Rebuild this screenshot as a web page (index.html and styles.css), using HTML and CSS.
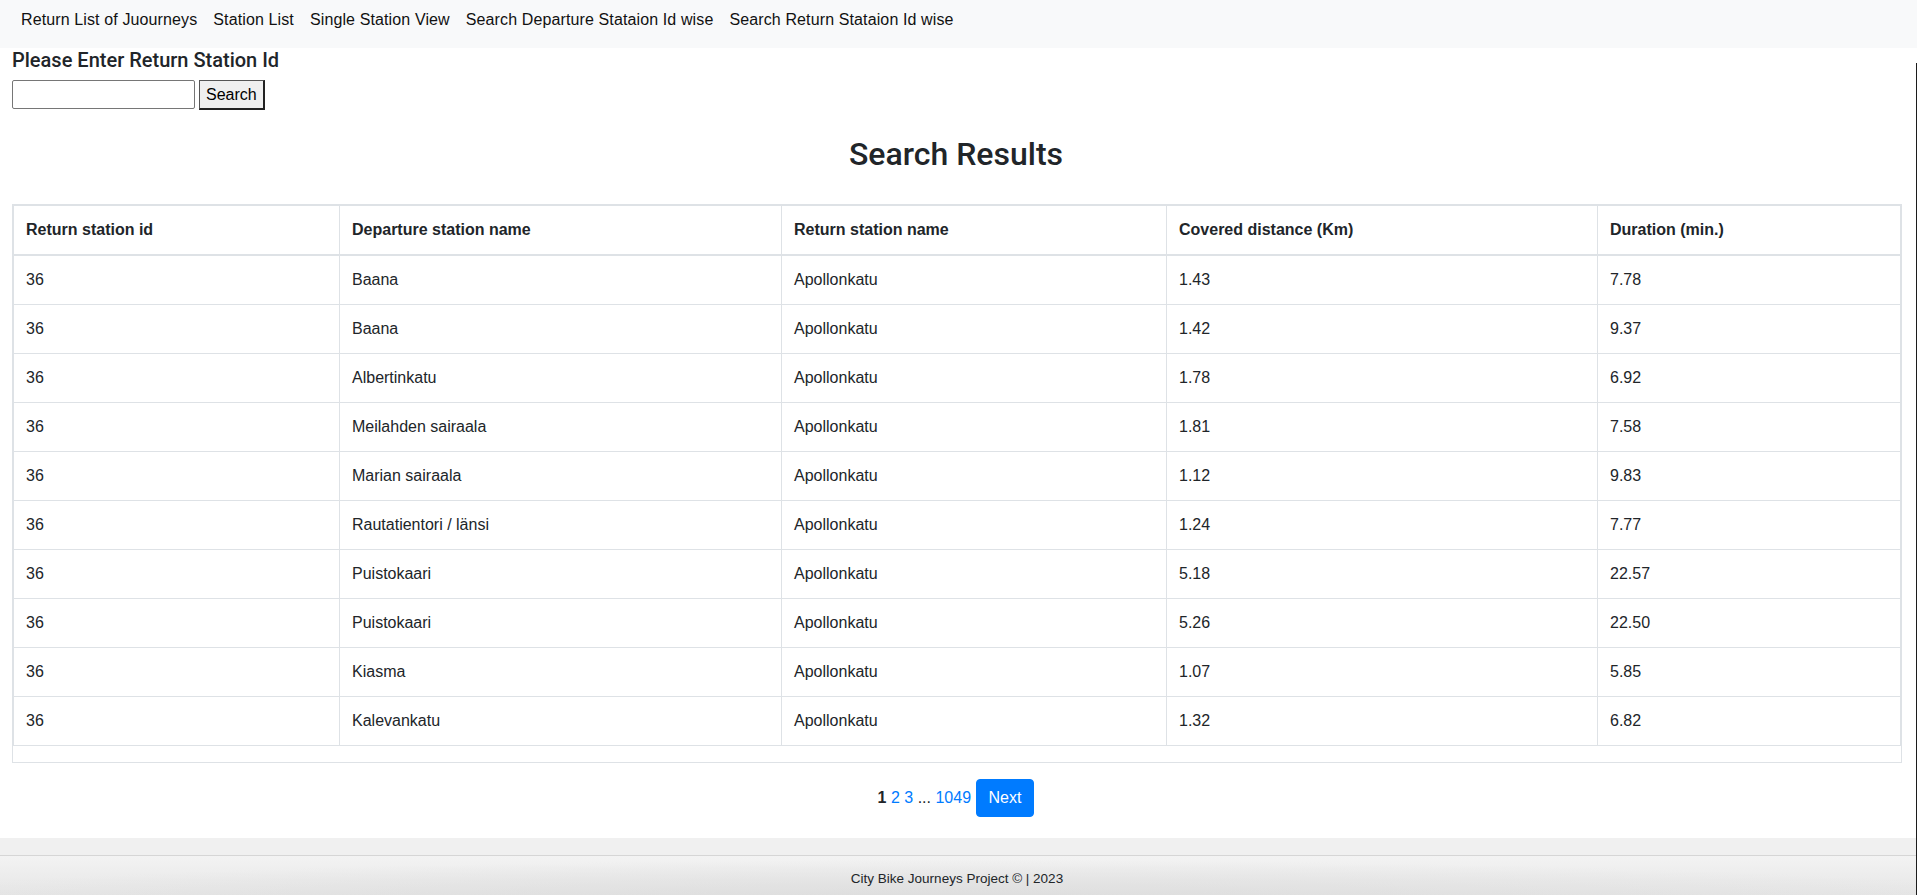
FILE: index.html
```html
<!DOCTYPE html>
<html lang="en">
<head>
<meta charset="utf-8">
<title>City Bike Journeys</title>
<link rel="stylesheet" href="styles.css">
</head>
<body>
<nav class="topnav">
  <a class="nav-link" href="#">Return List of Juourneys</a>
  <a class="nav-link" href="#">Station List</a>
  <a class="nav-link" href="#">Single Station View</a>
  <a class="nav-link" href="#">Search Departure Stataion Id wise</a>
  <a class="nav-link" href="#">Search Return Stataion Id wise</a>
</nav>
<main class="content">
  <h5 class="prompt">Please Enter Return Station Id</h5>
  <form class="search-form">
    <input class="search-input" type="text">
    <button class="search-btn" type="button">Search</button>
  </form>
  <h2 class="results-title">Search Results</h2>
  <div class="table-wrap">
    <table class="results">
      <colgroup>
        <col class="c1"><col class="c2"><col class="c3"><col class="c4"><col class="c5">
      </colgroup>
      <thead>
        <tr><th>Return station id</th><th>Departure station name</th><th>Return station name</th><th>Covered distance (Km)</th><th>Duration (min.)</th></tr>
      </thead>
      <tbody>
        <tr><td>36</td><td>Baana</td><td>Apollonkatu</td><td>1.43</td><td>7.78</td></tr>
        <tr><td>36</td><td>Baana</td><td>Apollonkatu</td><td>1.42</td><td>9.37</td></tr>
        <tr><td>36</td><td>Albertinkatu</td><td>Apollonkatu</td><td>1.78</td><td>6.92</td></tr>
        <tr><td>36</td><td>Meilahden sairaala</td><td>Apollonkatu</td><td>1.81</td><td>7.58</td></tr>
        <tr><td>36</td><td>Marian sairaala</td><td>Apollonkatu</td><td>1.12</td><td>9.83</td></tr>
        <tr><td>36</td><td>Rautatientori / länsi</td><td>Apollonkatu</td><td>1.24</td><td>7.77</td></tr>
        <tr><td>36</td><td>Puistokaari</td><td>Apollonkatu</td><td>5.18</td><td>22.57</td></tr>
        <tr><td>36</td><td>Puistokaari</td><td>Apollonkatu</td><td>5.26</td><td>22.50</td></tr>
        <tr><td>36</td><td>Kiasma</td><td>Apollonkatu</td><td>1.07</td><td>5.85</td></tr>
        <tr><td>36</td><td>Kalevankatu</td><td>Apollonkatu</td><td>1.32</td><td>6.82</td></tr>
      </tbody>
    </table>
  </div>
  <div class="pager">
    <b class="page-current">1</b> <a class="page-link" href="#">2</a> <a class="page-link" href="#">3</a> <span class="page-gap">...</span> <a class="page-link" href="#">1049</a> <button class="btn-next" type="button">Next</button>
  </div>
</main>
<footer class="footer">
  <div class="footer-inner">City Bike Journeys Project © | 2023</div>
</footer>
<div class="edge"></div>
</body>
</html>
```
FILE: styles.css
```css
* { box-sizing: border-box; }
html, body { margin: 0; padding: 0; }
body {
  font-family: "Liberation Sans", Arial, sans-serif;
  font-size: 16px;
  line-height: 24px;
  color: #212529;
  background: #ffffff;
  height: 895px;
  overflow: hidden;
}
.topnav {
  height: 48px;
  background: #f8f9fa;
  display: flex;
  align-items: flex-start;
  padding: 8px 0 0 13px;
}
.nav-link {
  color: #111;
  text-decoration: none;
  padding: 0 8px;
  line-height: 24px;
  font-size: 16px;
  letter-spacing: 0.12px;
}
.content {
  padding: 0 0 21px 12px;
  background: #fff;
}
.prompt {
  margin: 0;
  font-family: Roboto, "Liberation Sans", Arial, sans-serif;
  font-size: 20px;
  line-height: 24px;
  font-weight: 500;
  color: #212529;
}
.search-form {
  margin: 8px 0 0;
  display: flex;
  gap: 4px;
  height: 30px;
}
.search-input {
  width: 183px;
  height: 29px;
  border: 1px solid #767676;
  border-radius: 2px;
  padding: 1px 2px;
  font-size: 16px;
  background: #fff;
}
.search-btn {
  height: 30px;
  padding: 0 6px;
  font-family: "Liberation Sans", Arial, sans-serif;
  font-size: 16px;
  color: #000;
  background: #efefef;
  border-style: solid;
  border-width: 1px 2px 2px 1px;
  border-color: #555 #222 #222 #555;
  border-radius: 0;
}
.results-title {
  margin: 25px 0 31px;
  text-align: center;
  font-family: Roboto, "Liberation Sans", Arial, sans-serif;
  font-size: 32px;
  line-height: 38px;
  font-weight: 500;
  color: #212529;
  padding-right: 17px;
}
.table-wrap {
  width: 1890px;
  border: 1px solid #dee2e6;
}
.results {
  width: 100%;
  border-collapse: collapse;
  table-layout: fixed;
  margin-bottom: 16px;
  border: 1px solid #dee2e6;
}
.c1 { width: 326px; }
.c2 { width: 442px; }
.c3 { width: 385px; }
.c4 { width: 431px; }
.results th, .results td {
  border: 1px solid #dee2e6;
  padding: 12px;
  text-align: left;
  vertical-align: top;
  white-space: nowrap;
}
.results th {
  font-weight: 700;
  border-bottom-width: 2px;
}
.pager {
  margin-top: 16px;
  text-align: center;
  height: 38px;
  line-height: 38px;
  padding-right: 17px;
}
.page-current { font-weight: 700; color: #212529; }
.page-link { color: #007bff; text-decoration: none; }
.page-gap { color: #212529; }
.btn-next {
  height: 38px;
  padding: 6px 12px;
  font-family: "Liberation Sans", Arial, sans-serif;
  font-size: 16px;
  line-height: 24px;
  color: #fff;
  background: #007bff;
  border: 1px solid #007bff;
  border-radius: 4px;
  vertical-align: top;
}
.footer {
  background: #f0f0f0;
  padding-top: 17px;
}
.footer-inner {
  border-top: 1px solid #d6d6d6;
  height: 40px;
  padding-top: 13px;
  text-align: center;
  font-size: 13.5px;
  line-height: 20px;
  color: #212529;
  padding-right: 3px;
  background:
    radial-gradient(ellipse 60% 120% at 50% 130%, #dcdcdc 0%, rgba(220,220,220,0) 100%),
    linear-gradient(to bottom, #f3f3f3, #e6e6e6);
}
.edge {
  position: fixed;
  right: 0;
  top: 63px;
  bottom: 0;
  width: 1px;
  background: #1c1c1c;
}
```
